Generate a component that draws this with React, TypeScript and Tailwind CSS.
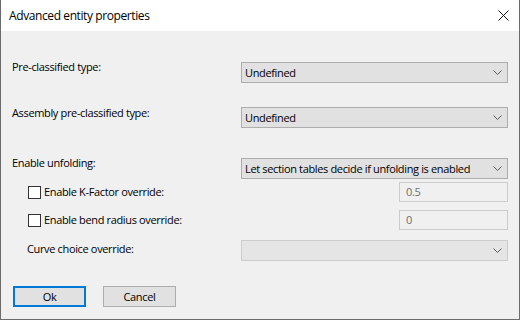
import React from "react";

function Chevron() {
  return (
    <svg width="9" height="5" viewBox="0 0 9 5" className="shrink-0">
      <path d="M0.5 0.5 L4.5 4.5 L8.5 0.5" fill="none" stroke="#5a5a5a" strokeWidth="1" />
    </svg>
  );
}

function Combo({ text, disabled }: { text?: string; disabled?: boolean }) {
  return (
    <div
      className={
        "w-[267px] h-[21px] flex items-center justify-between pl-[3px] pr-[5px] border " +
        (disabled ? "border-[#cccccc] bg-[#e5e5e5]" : "border-[#adadad] bg-[#e1e1e1]")
      }
    >
      <span className="leading-4 text-black whitespace-nowrap">{text ?? ""}</span>
      <Chevron />
    </div>
  );
}

function TextBox({ value }: { value: string }) {
  return (
    <div className="w-[109px] h-[20px] flex items-center px-[6px] border border-[#cccccc] bg-[#f0f0f0] text-[#6d6d6d] leading-4">
      {value}
    </div>
  );
}

function CheckRow({ label, value }: { label: string; value: string }) {
  return (
    <div className="flex items-center justify-between">
      <div className="flex items-center pl-[16px]">
        <div className="w-[13px] h-[13px] border border-[#333333] bg-white" />
        <span className="ml-[3px] leading-4 whitespace-nowrap">{label}</span>
      </div>
      <TextBox value={value} />
    </div>
  );
}

export default function App() {
  return (
    <div
      className="w-[520px] h-[320px] flex flex-col border-l border-r border-b border-[#6b6b6b] bg-[#f0f0f0] text-[11px] tracking-[-0.35px] text-black overflow-hidden"
      style={{ fontFamily: '"Open Sans", "Liberation Sans", Arial, sans-serif' }}
    >
      <div className="h-[31px] shrink-0 bg-white flex items-center justify-between pl-[8px] pr-[8px]">
        <span className="leading-4 text-[12px] tracking-[-0.4px]">Advanced entity properties</span>
        <svg width="11" height="11" viewBox="0 0 11 11" className="mr-[2px]">
          <path d="M0.5 0.5 L10.5 10.5 M10.5 0.5 L0.5 10.5" stroke="#111" strokeWidth="1" />
        </svg>
      </div>
      <div className="flex-1 flex flex-col pl-[11px] pr-[11px] pt-[31px]">
        <div className="flex items-start justify-between">
          <span className="leading-4 -mt-[3px]">Pre-classified type:</span>
          <Combo text="Undefined" />
        </div>
        <div className="flex items-start justify-between mt-[24px]">
          <span className="leading-4 -mt-[2px]">Assembly pre-classified type:</span>
          <Combo text="Undefined" />
        </div>
        <div className="flex items-start justify-between mt-[30px]">
          <span className="leading-4 -mt-[3px]">Enable unfolding:</span>
          <Combo text="Let section tables decide if unfolding is enabled" />
        </div>
        <div className="mt-[3px]">
          <CheckRow label="Enable K-Factor override:" value="0.5" />
        </div>
        <div className="mt-[8px]">
          <CheckRow label="Enable bend radius override:" value="0" />
        </div>
        <div className="flex items-start justify-between mt-[10px]">
          <span className="leading-4 mt-[1px] pl-[15px]">Curve choice override:</span>
          <Combo disabled />
        </div>
        <div className="flex gap-[17px] mt-[25px] pl-[1px]">
          <button className="w-[73px] h-[21px] border-2 border-[#0078d7] bg-[#e1e1e1] leading-4 text-black">
            Ok
          </button>
          <button className="w-[73px] h-[21px] border border-[#adadad] bg-[#e1e1e1] leading-4 text-black">
            Cancel
          </button>
        </div>
      </div>
    </div>
  );
}
